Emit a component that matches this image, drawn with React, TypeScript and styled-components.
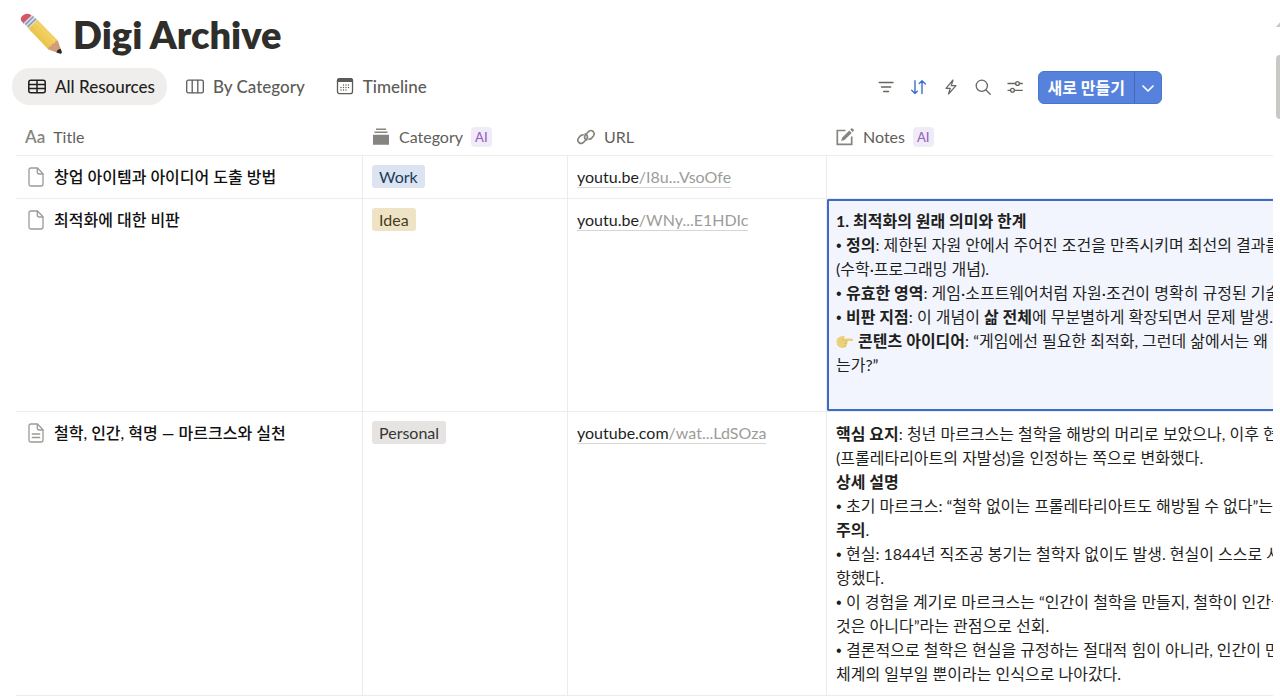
import React from 'react';
import styled, { createGlobalStyle } from 'styled-components';

const GlobalStyle = createGlobalStyle`
  *, *::before, *::after { box-sizing: border-box; }
  body {
    margin: 0;
    background: #fff;
    color: #1f1f1e;
    font-family: Lato, 'Noto Sans CJK KR', sans-serif;
    font-size: 16px;
    line-height: 24px;
  }
  button { font: inherit; border: 0; background: none; padding: 0; margin: 0; cursor: pointer; }
  svg { display: block; flex: none; }
`;

const Page = styled.div`
  display: flex;
  min-height: 100vh;
  overflow: hidden;
`;

const Main = styled.main`
  flex: 1;
  min-width: 0;
`;

const ScrollRail = styled.div`
  flex: none;
  width: 7px;
  padding: 20px 0 0 3px;
  overflow: hidden;
`;

const ScrollThumb = styled.div`
  width: 12px;
  height: 64px;
  margin-top: 27px;
  border-radius: 4px;
  background: #c8c8c5;
`;

const Header = styled.header`
  display: flex;
  align-items: center;
  gap: 10px;
  height: 68px;
  padding: 0 0 0 20px;
`;

const PageTitle = styled.h1`
  margin: 0;
  font-size: 38px;
  line-height: 48px;
  font-weight: 800;
  color: #2f2e2b;
`;

const Toolbar = styled.div`
  display: flex;
  align-items: center;
  justify-content: space-between;
  height: 37px;
  padding: 0 111px 0 12px;
`;

const TabList = styled.div`
  display: flex;
  gap: 3px;
`;

const Tab = styled.button<{ $active?: boolean }>`
  display: flex;
  align-items: center;
  gap: 8px;
  height: 37px;
  padding: 0 12px 0 15px;
  border-radius: 18px;
  font-size: 17px;
  font-weight: 500;
  white-space: nowrap;
  color: ${(p) => (p.$active ? '#1f1f1e' : '#5c5b58')};
  background: ${(p) => (p.$active ? '#efeeec' : 'transparent')};
`;

const Actions = styled.div`
  display: flex;
  align-items: center;
  gap: 12px;
`;

const IconButton = styled.button<{ $accent?: boolean }>`
  display: grid;
  place-items: center;
  width: 20px;
  height: 24px;
  color: ${(p) => (p.$accent ? '#3a6fc9' : '#666562')};
`;

const NewGroup = styled.div`
  display: flex;
  height: 33px;
  margin: 2px 0 0 1px;
  border-radius: 6px;
  overflow: hidden;
  background: #5682dd;
  border: 1px solid #4675ce;
  color: #fff;
`;

const NewButton = styled.button`
  padding: 0 9px;
  color: #fff;
  font-weight: 700;
  white-space: nowrap;
`;

const NewMenuButton = styled.button`
  display: grid;
  place-items: center;
  width: 27px;
  color: #fff;
  border-left: 1px solid #4169b5;
`;

const TableWrap = styled.div`
  margin: 13px 0 0 16px;
  overflow: hidden;
`;

const Table = styled.table`
  width: 100%;
  table-layout: fixed;
  border-collapse: separate;
  border-spacing: 0;
`;

const Col = styled.col<{ $width?: number }>`
  width: ${(p) => (p.$width ? `${p.$width}px` : 'auto')};
`;

const HeadCell = styled.th`
  height: 38px;
  padding: 0 0 0 9px;
  border-bottom: 1px solid #ececeb;
  font-weight: 400;
  text-align: left;
  color: #5f5e5b;
`;

const HeadLabel = styled.div`
  display: flex;
  align-items: center;
  gap: 8px;
`;

const TypeGlyph = styled.span`
  font-size: 17px;
  font-weight: 600;
  color: #858481;
`;

const AiBadge = styled.span`
  padding: 0 4px;
  border-radius: 4px;
  background: #f1ebf8;
  color: #9362c4;
  font-size: 13px;
  line-height: 20px;
  font-weight: 500;
`;

const Cell = styled.td<{ $flush?: boolean }>`
  padding: ${(p) => (p.$flush ? '0' : '9px')};
  border-bottom: 1px solid #ececeb;
  border-left: 1px solid #ececeb;
  vertical-align: top;
  white-space: nowrap;
  overflow: hidden;
  &:first-child { border-left: 0; padding-left: 12px; }
`;

const RowTitle = styled.div`
  display: flex;
  align-items: center;
  gap: 10px;
  font-weight: 500;
  color: #111;
`;

const tones = {
  blue: { bg: '#dce4f1', fg: '#203a5c' },
  yellow: { bg: '#efe3c6', fg: '#453b20' },
  gray: { bg: '#e5e4e2', fg: '#373633' },
};

const Tag = styled.span<{ $tone: keyof typeof tones }>`
  display: inline-block;
  padding: 0 7px;
  border-radius: 3px;
  line-height: 23px;
  background: ${(p) => tones[p.$tone].bg};
  color: ${(p) => tones[p.$tone].fg};
`;

const Url = styled.a`
  display: inline-block;
  line-height: 21px;
  border-bottom: 1px solid #d5d5d3;
  color: #1f1f1e;
  text-decoration: none;
`;

const UrlPath = styled.span`
  color: #9d9c99;
`;

const Note = styled.div<{ $selected?: boolean }>`
  padding: ${(p) => (p.$selected ? '8px 0 7px 7px' : '10px 0 9px 9px')};
  min-height: ${(p) => (p.$selected ? '212px' : '0')};
  border: ${(p) => (p.$selected ? '2px solid #3b6bc6' : '0')};
  border-right: 0;
  border-radius: 2px 0 0 2px;
  background: ${(p) => (p.$selected ? '#f2f5fd' : 'transparent')};
  overflow: hidden;
`;

const NoteLine = styled.div`
  height: 24px;
  white-space: nowrap;
  b { font-weight: 700; }
  svg { display: inline-block; vertical-align: -3px; }
`;

const Bullet = styled.span`
  display: inline-block;
  width: 10px;
  font-family: 'Liberation Sans', sans-serif;
`;

type IconProps = { children: React.ReactNode; w?: number; h?: number; sw?: number };
const Icon = ({ children, w = 20, h = 20, sw = 1.3 }: IconProps) => (
  <svg width={w} height={h} viewBox={`0 0 ${w} ${h}`} fill="none" stroke="currentColor"
    strokeWidth={sw} strokeLinecap="round" strokeLinejoin="round" aria-hidden="true">
    {children}
  </svg>
);

const PencilEmoji = () => (
  <svg width="43" height="42" viewBox="0 0 43 42" aria-hidden="true">
    <path d="M1 7.500Q0 4 3.500 2Q6.500 0 10 1.200L12 3L4 11Z" fill="#d4576b" />
    <path d="M12 2L17.500 7L8.500 15.500L3.500 10Z" fill="#d9dee6" />
    <path d="M13.500 3.500L5.300 11.600M16 5.800L7.600 13.900" stroke="#8b9cb5" strokeWidth="1.500" />
    <path d="M17.500 7L38 28L28.500 36.500L8.500 15.500Z" fill="#efcc55" />
    <path d="M17.500 7L38 28L35 30.700L14.500 9.800Z" fill="#f1d067" />
    <path d="M11.500 12.700L31.500 33.800L28.500 36.500L8.500 15.500Z" fill="#eac551" />
    <path d="M38 28L41.800 39.300Q41.500 41 39.500 40.500L28.500 36.500Q28 33 31 33.500Q31.500 30 34.500 30.500Q35 27 38 28Z" fill="#cf9d7a" />
    <path d="M40.600 35.800L41.900 39.300Q41.600 41 39.700 40.600L36.500 39.500Q37 36.500 40.600 35.800Z" fill="#29292b" />
  </svg>
);

const PointEmoji = () => (
  <svg width="18" height="16" viewBox="0 0 18 16" aria-hidden="true">
    <path d="M1 5Q3 2.500 6 2Q9 1.300 8.700 3L7.500 4.400H16Q17.300 4.700 17.300 5.700T16 7H11.500Q12.200 8.500 11 9.500Q11.500 11 10 12Q10 13.500 8 13.800Q4 14.200 2.500 12.500Q.5 11 .5 8Z" fill="#ead27a" />
    <path d="M7.500 4.500L6.500 6.500M11.500 7H8.500M11 9.500H8.500M10 12H8" stroke="#d5b353" strokeWidth=".7" fill="none" />
  </svg>
);

const TableIcon = () => (
  <Icon sw={1.5}><rect x="1.800" y="3.200" width="16.400" height="12.600" rx="2" /><path d="M2 7.400h16M2 11.600h16M10 3.500v12" /></Icon>
);
const BoardIcon = () => (
  <Icon><rect x="1.700" y="3.200" width="16.600" height="12.600" rx="1.600" /><path d="M7.200 3.500v12M12.800 3.500v12" /></Icon>
);
const CalendarIcon = () => (
  <Icon>
    <rect x="2.500" y="1.700" width="15" height="15" rx="2.300" />
    <path d="M2.500 4.400V3.700Q2.500 1.700 4.500 1.700h11q2 0 2 2V4.400Z" fill="currentColor" />
    <path d="M8.500 8h.01M11 8h.01M13.500 8h.01M6 10.500h.01M8.500 10.500h.01M11 10.500h.01M13.500 10.500h.01M6 13h.01M8.500 13h.01M11 13h.01" strokeWidth="1.400" />
  </Icon>
);
const FilterIcon = () => <Icon sw={1.4}><path d="M2.200 5.500h13.800M4.500 10h9.200M6.700 14.500h4.800" /></Icon>;
const SortIcon = () => <Icon sw={1.4}><path d="M6 3.800v12.700M2.700 13.200L6 16.500l2.300-2.300M13 16.500V3.800M10.300 6.500L13 3.800l3.300 3.300" /></Icon>;
const BoltIcon = () => <Icon sw={1.200}><path d="M12 3L5 11.300h4.300L7.500 17L15 8.700h-4.700Z" /></Icon>;
const SearchIcon = () => <Icon><circle cx="8.800" cy="8.800" r="5.600" /><path d="M13 13l4.200 4.200" /></Icon>;
const SettingsIcon = () => (
  <Icon><path d="M3 6.500h7.600M14.400 6.500h2.900M3 13.300h2.600M9.400 13.300h7.900" /><circle cx="12.500" cy="6.500" r="1.900" /><circle cx="7.500" cy="13.300" r="1.900" /></Icon>
);
const ChevronIcon = () => <Icon w={14} h={14} sw={1.700}><path d="M2 5l5 5 5-5" /></Icon>;

const HeadSvg = styled.svg`
  width: 20px;
  height: 20px;
  color: #858481;
`;
const StackIcon = () => (
  <HeadSvg viewBox="0 0 20 20" fill="currentColor" aria-hidden="true">
    <path d="M5 1.500h10v1.400H5ZM3.500 4.500h13v1.500h-13ZM2 7.700h16v10H2Z" />
  </HeadSvg>
);
const LinkIcon = () => (
  <HeadSvg viewBox="0 0 24 24" fill="none" stroke="currentColor" strokeWidth="2" strokeLinecap="round" strokeLinejoin="round" aria-hidden="true">
    <g transform="rotate(-4 12 12)">
      <path d="M8.700 9.300Q6.500 9 5 10.500L3 12.700Q.8 15.400 3 18Q5.700 20.600 8.500 18.300L12.500 14.500Q15 11.500 12.600 9.300Q12 8.700 11.200 8.500" />
      <path d="M15.300 14.700Q17.500 15 19 13.500L21 11.300Q23.200 8.600 21 6Q18.300 3.400 15.500 5.700L11.500 9.500Q9 12.500 11.400 14.700Q12 15.300 12.800 15.500" />
    </g>
  </HeadSvg>
);
const ComposeIcon = () => (
  <HeadSvg viewBox="0 0 20 20" fill="none" stroke="currentColor" strokeWidth="1.700" aria-hidden="true">
    <path d="M10.500 3.500H2.300V17.300H16.700V9.500" />
    <path d="M6.200 14L7.100 10.700L14.300 3.500L16.700 5.900L9.500 13.100Z" fill="currentColor" stroke="none" />
    <path d="M15.200 2.600L16.300 1.500Q17 1 17.800 1.700L18.600 2.500Q19.200 3.200 18.600 3.900L17.600 5Z" fill="currentColor" stroke="none" />
  </HeadSvg>
);

const FileSvg = styled.svg`
  width: 16px;
  height: 20px;
  color: #9b9a97;
`;
const FileIcon = ({ filled }: { filled?: boolean }) => (
  <FileSvg viewBox="0 0 16 20" fill="none" stroke="currentColor" strokeWidth="1.300" strokeLinejoin="round" strokeLinecap="round" aria-hidden="true">
    <path d="M3 1h6.500L15 6.700V17q0 2-2 2H3q-2 0-2-2V3q0-2 2-2Z" />
    <path d="M9.300 1.300V5q0 2 2 2H14.700" />
    {filled && <path d="M4.300 11h7.400M4.300 14.500h7.400" />}
  </FileSvg>
);

const NoteOne = () => (
  <Note $selected>
    <NoteLine><b>1. 최적화의 원래 의미와 한계</b></NoteLine>
    <NoteLine><Bullet>•</Bullet><b>정의</b>: 제한된 자원 안에서 주어진 조건을 만족시키며 최선의 결과를</NoteLine>
    <NoteLine>(수학·프로그래밍 개념).</NoteLine>
    <NoteLine><Bullet>•</Bullet><b>유효한 영역</b>: 게임·소프트웨어처럼 자원·조건이 명확히 규정된 기술</NoteLine>
    <NoteLine><Bullet>•</Bullet><b>비판 지점</b>: 이 개념이 <b>삶 전체</b>에 무분별하게 확장되면서 문제 발생.</NoteLine>
    <NoteLine><PointEmoji /> <b>콘텐츠 아이디어</b>: “게임에선 필요한 최적화, 그런데 삶에서는 왜</NoteLine>
    <NoteLine>는가?”</NoteLine>
  </Note>
);

const NoteTwo = () => (
  <Note>
    <NoteLine><b>핵심 요지</b>: 청년 마르크스는 철학을 해방의 머리로 보았으나, 이후 현</NoteLine>
    <NoteLine>(프롤레타리아트의 자발성)을 인정하는 쪽으로 변화했다.</NoteLine>
    <NoteLine><b>상세 설명</b></NoteLine>
    <NoteLine><Bullet>•</Bullet>초기 마르크스: “철학 없이는 프롤레타리아트도 해방될 수 없다”는</NoteLine>
    <NoteLine><b>주의</b>.</NoteLine>
    <NoteLine><Bullet>•</Bullet>현실: 1844년 직조공 봉기는 철학자 없이도 발생. 현실이 스스로 사</NoteLine>
    <NoteLine>항했다.</NoteLine>
    <NoteLine><Bullet>•</Bullet>이 경험을 계기로 마르크스는 “인간이 철학을 만들지, 철학이 인간을</NoteLine>
    <NoteLine>것은 아니다”라는 관점으로 선회.</NoteLine>
    <NoteLine><Bullet>•</Bullet>결론적으로 철학은 현실을 규정하는 절대적 힘이 아니라, 인간이 만</NoteLine>
    <NoteLine>체계의 일부일 뿐이라는 인식으로 나아갔다.</NoteLine>
  </Note>
);

type Row = {
  title: string;
  filled?: boolean;
  tag: string;
  tone: keyof typeof tones;
  host: string;
  path: string;
  note?: React.ReactNode;
};

const rows: Row[] = [
  { title: '창업 아이템과 아이디어 도출 방법', tag: 'Work', tone: 'blue', host: 'youtu.be', path: '/I8u...VsoOfe' },
  { title: '최적화에 대한 비판', tag: 'Idea', tone: 'yellow', host: 'youtu.be', path: '/WNy...E1HDIc', note: <NoteOne /> },
  { title: '철학, 인간, 혁명 — 마르크스와 실천', filled: true, tag: 'Personal', tone: 'gray', host: 'youtube.com', path: '/wat...LdSOza', note: <NoteTwo /> },
];

export default function App() {
  return (
    <>
      <GlobalStyle />
      <Page>
        <Main>
          <Header>
            <PencilEmoji />
            <PageTitle>Digi Archive</PageTitle>
          </Header>
          <Toolbar>
            <TabList role="tablist">
              <Tab role="tab" aria-selected="true" $active><TableIcon />All Resources</Tab>
              <Tab role="tab" aria-selected="false"><BoardIcon />By Category</Tab>
              <Tab role="tab" aria-selected="false"><CalendarIcon />Timeline</Tab>
            </TabList>
            <Actions>
              <IconButton aria-label="Filter"><FilterIcon /></IconButton>
              <IconButton aria-label="Sort" $accent><SortIcon /></IconButton>
              <IconButton aria-label="Automations"><BoltIcon /></IconButton>
              <IconButton aria-label="Search"><SearchIcon /></IconButton>
              <IconButton aria-label="Settings"><SettingsIcon /></IconButton>
              <NewGroup>
                <NewButton>새로 만들기</NewButton>
                <NewMenuButton aria-label="More options"><ChevronIcon /></NewMenuButton>
              </NewGroup>
            </Actions>
          </Toolbar>
          <TableWrap>
            <Table>
              <colgroup>
                <Col $width={346} />
                <Col $width={205} />
                <Col $width={259} />
                <Col />
              </colgroup>
              <thead>
                <tr>
                  <HeadCell><HeadLabel><TypeGlyph>Aa</TypeGlyph>Title</HeadLabel></HeadCell>
                  <HeadCell><HeadLabel><StackIcon />Category<AiBadge>AI</AiBadge></HeadLabel></HeadCell>
                  <HeadCell><HeadLabel><LinkIcon />URL</HeadLabel></HeadCell>
                  <HeadCell><HeadLabel><ComposeIcon />Notes<AiBadge>AI</AiBadge></HeadLabel></HeadCell>
                </tr>
              </thead>
              <tbody>
                {rows.map((row) => (
                  <tr key={row.title}>
                    <Cell><RowTitle><FileIcon filled={row.filled} />{row.title}</RowTitle></Cell>
                    <Cell><Tag $tone={row.tone}>{row.tag}</Tag></Cell>
                    <Cell><Url href={`https://${row.host}`}>{row.host}<UrlPath>{row.path}</UrlPath></Url></Cell>
                    <Cell $flush>{row.note}</Cell>
                  </tr>
                ))}
              </tbody>
            </Table>
          </TableWrap>
        </Main>
        <ScrollRail aria-hidden="true">
          <svg width="12" height="8" viewBox="0 0 12 8"><path d="M0 7L6 0L12 7Z" fill="#c8c8c5" /></svg>
          <ScrollThumb />
        </ScrollRail>
      </Page>
    </>
  );
}
